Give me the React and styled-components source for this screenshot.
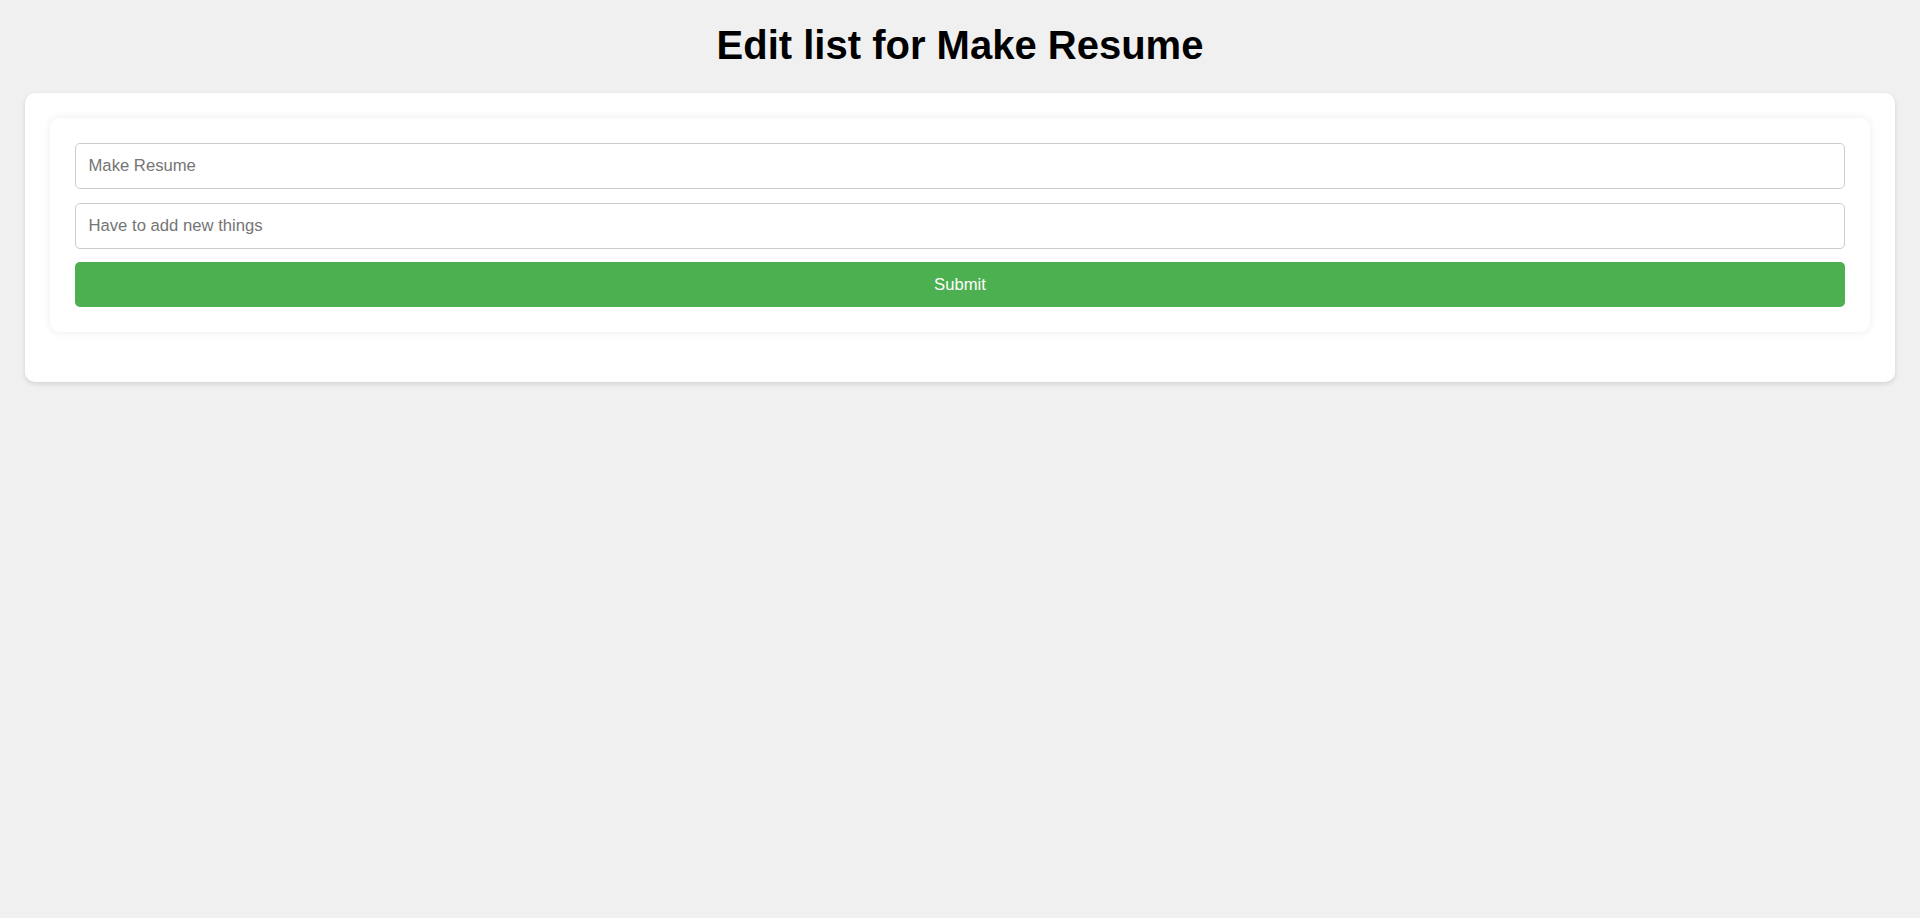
import React from 'react'
import styled, { createGlobalStyle } from 'styled-components'

const GlobalStyle = createGlobalStyle`
  * { box-sizing: border-box; }
  body {
    margin: 0;
    background-color: #f0f0f0;
    font-family: "Liberation Sans", Arial, sans-serif;
  }
`

const Page = styled.div`
  padding: 0 25px 25px;
`

const Title = styled.h1`
  margin: 0;
  padding: 22px 0 25px;
  font-size: 40px;
  line-height: 46px;
  font-weight: bold;
  color: #000;
  text-align: center;
`

const Card = styled.div`
  background-color: #fff;
  border-radius: 10px;
  padding: 25px 25px 50px;
  box-shadow: 0 2px 5px rgba(0, 0, 0, 0.12);
`

const Form = styled.form`
  display: flex;
  flex-direction: column;
  gap: 13.3px;
  padding: 25px;
  border-radius: 10px;
  background-color: #fff;
  box-shadow: 0 0 10px rgba(0, 0, 0, 0.08);
`

const Input = styled.input`
  width: 100%;
  height: 46.3px;
  padding: 0 12.5px;
  border: 1px solid #ccc;
  border-radius: 5px;
  font-family: "Liberation Sans", Arial, sans-serif;
  font-size: 16.67px;
  color: #333;
  outline: none;
  &::placeholder { color: #757575; }
`

const Button = styled.button`
  width: 100%;
  height: 45px;
  border: none;
  border-radius: 5px;
  background-color: #4caf50;
  color: #fff;
  font-family: "Liberation Sans", Arial, sans-serif;
  font-size: 16.67px;
  cursor: pointer;
`

const App = () => {
    return (
        <Page>
            <GlobalStyle/>
            <Title>Edit list for Make Resume</Title>
            <Card>
                <Form onSubmit={e => e.preventDefault()}>
                    <Input placeholder='Make Resume'/>
                    <Input placeholder='Have to add new things'/>
                    <Button type='submit'>Submit</Button>
                </Form>
            </Card>
        </Page>
    )
}

export default App
